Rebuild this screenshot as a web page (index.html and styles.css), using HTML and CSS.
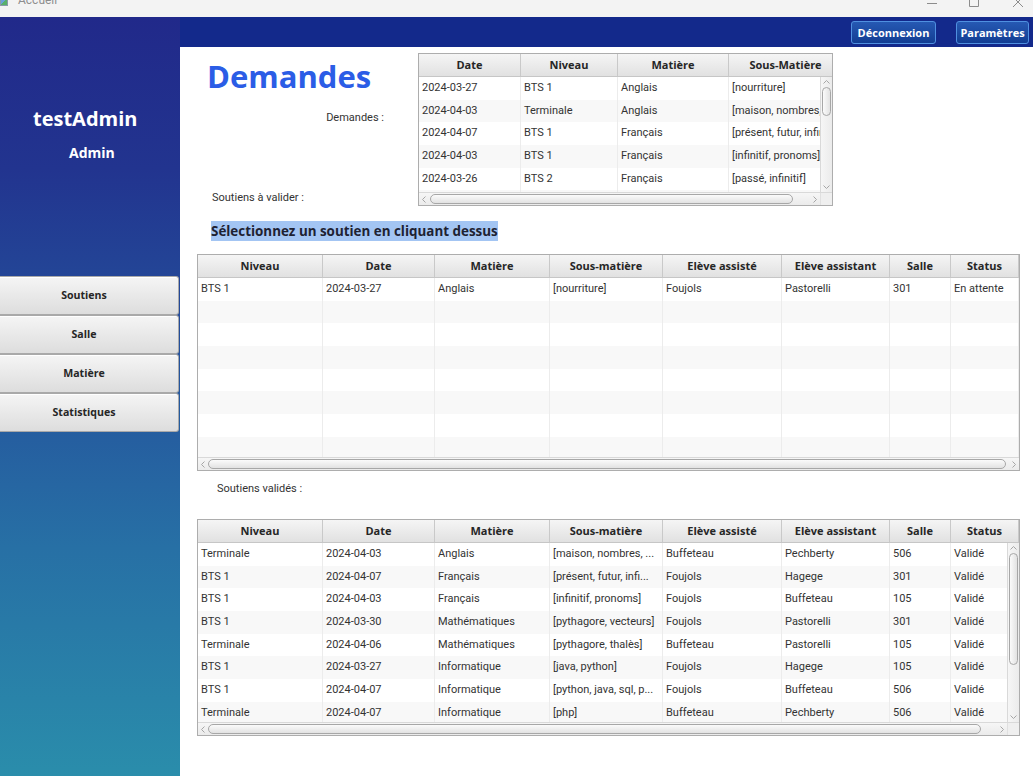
FILE: index.html
```html
<!DOCTYPE html>
<html lang="fr">
<head>
<meta charset="utf-8">
<title>Accueil</title>
<link rel="stylesheet" href="styles.css">
</head>
<body>
<div class="titlebar">
  <span class="ticon"></span>
  <span class="ttitle">Accueil</span>
  <div class="wctl">
    <svg class="wc wc-min" width="10" height="7" viewBox="0 0 10 7"><path d="M0 3.5H10" stroke="#8c8c8c" stroke-width="1"/></svg>
    <svg class="wc wc-max" width="10" height="7" viewBox="0 0 10 7"><path d="M0.5 0V6.5H9.5V0" fill="none" stroke="#8c8c8c" stroke-width="1"/></svg>
    <svg class="wc wc-close" width="10" height="7" viewBox="0 0 10 7"><path d="M0 -3L10 7M10 -3L0 7" stroke="#8c8c8c" stroke-width="1"/></svg>
  </div>
</div>
<div class="app">
  <aside class="sidebar">
    <div class="user">testAdmin</div>
    <div class="role">Admin</div>
    <nav class="menu">
      <button class="mbtn">Soutiens</button>
      <button class="mbtn">Salle</button>
      <button class="mbtn">Matière</button>
      <button class="mbtn">Statistiques</button>
    </nav>
  </aside>
  <div class="main">
    <header class="topbar">
      <button class="tb tb-logout">Déconnexion</button>
      <button class="tb tb-params">Paramètres</button>
    </header>
    <section class="content">
      <div class="top">
        <div class="top-left">
          <h1 class="title">Demandes</h1>
          <div class="lbl lbl-dem">Demandes :</div>
          <div class="lbl lbl-val">Soutiens à valider :</div>
        </div>
        <div class="tv tv-small">
          <div class="thead cols-s">
            <div>Date</div><div>Niveau</div><div>Matière</div><div>Sous-Matière</div>
          </div>
          <div class="tbody">
            <div class="rows">
              <div class="row cols-s"><div>2024-03-27</div><div>BTS 1</div><div>Anglais</div><div>[nourriture]</div></div>
              <div class="row cols-s"><div>2024-04-03</div><div>Terminale</div><div>Anglais</div><div>[maison, nombres, couleurs]</div></div>
              <div class="row cols-s"><div>2024-04-07</div><div>BTS 1</div><div>Français</div><div>[présent, futur, infinitif]</div></div>
              <div class="row cols-s"><div>2024-04-03</div><div>BTS 1</div><div>Français</div><div>[infinitif, pronoms]</div></div>
              <div class="row cols-s"><div>2024-03-26</div><div>BTS 2</div><div>Français</div><div>[passé, infinitif]</div></div>
              <div class="row cols-s"><div></div><div></div><div></div><div></div></div>
            </div>
            <div class="vbar">
              <div class="arr"><svg width="7" height="4" viewBox="0 0 7 4"><path d="M0.5 3.5L3.5 0.5L6.5 3.5" fill="none" stroke="#a6a6a6"/></svg></div>
              <div class="vtrack"><div class="thumb-v" style="margin-top:0px;height:29px"></div></div>
              <div class="arr"><svg width="7" height="4" viewBox="0 0 7 4"><path d="M0.5 0.5L3.5 3.5L6.5 0.5" fill="none" stroke="#a6a6a6"/></svg></div>
            </div>
          </div>
          <div class="hbar">
            <div class="arr"><svg width="4" height="7" viewBox="0 0 4 7"><path d="M3.5 0.5L0.5 3.5L3.5 6.5" fill="none" stroke="#a6a6a6"/></svg></div>
            <div class="htrack"><div class="thumb-h" style="margin-left:1px;width:363px"></div></div>
            <div class="arr"><svg width="4" height="7" viewBox="0 0 4 7"><path d="M0.5 0.5L3.5 3.5L0.5 6.5" fill="none" stroke="#a6a6a6"/></svg></div>
            <div class="corner"></div>
          </div>
        </div>
      </div>

      <div class="hint">Sélectionnez un soutien en cliquant dessus</div>

      <div class="tv tv-big">
        <div class="thead cols-b">
          <div>Niveau</div><div>Date</div><div>Matière</div><div>Sous-matière</div><div>Elève assisté</div><div>Elève assistant</div><div>Salle</div><div>Status</div>
        </div>
        <div class="tbody">
          <div class="rows">
            <div class="row cols-b"><div>BTS 1</div><div>2024-03-27</div><div>Anglais</div><div>[nourriture]</div><div>Foujols</div><div>Pastorelli</div><div>301</div><div>En attente</div></div>
            <div class="row cols-b"><div></div><div></div><div></div><div></div><div></div><div></div><div></div><div></div></div>
            <div class="row cols-b"><div></div><div></div><div></div><div></div><div></div><div></div><div></div><div></div></div>
            <div class="row cols-b"><div></div><div></div><div></div><div></div><div></div><div></div><div></div><div></div></div>
            <div class="row cols-b"><div></div><div></div><div></div><div></div><div></div><div></div><div></div><div></div></div>
            <div class="row cols-b"><div></div><div></div><div></div><div></div><div></div><div></div><div></div><div></div></div>
            <div class="row cols-b"><div></div><div></div><div></div><div></div><div></div><div></div><div></div><div></div></div>
            <div class="row cols-b"><div></div><div></div><div></div><div></div><div></div><div></div><div></div><div></div></div>
          </div>
        </div>
        <div class="hbar">
          <div class="arr"><svg width="4" height="7" viewBox="0 0 4 7"><path d="M3.5 0.5L0.5 3.5L3.5 6.5" fill="none" stroke="#a6a6a6"/></svg></div>
          <div class="htrack"><div class="thumb-h" style="margin-left:0px;width:798px"></div></div>
          <div class="arr"><svg width="4" height="7" viewBox="0 0 4 7"><path d="M0.5 0.5L3.5 3.5L0.5 6.5" fill="none" stroke="#a6a6a6"/></svg></div>
        </div>
      </div>

      <div class="lbl lbl-ok">Soutiens validés :</div>

      <div class="tv tv-big tv-last">
        <div class="thead cols-b">
          <div>Niveau</div><div>Date</div><div>Matière</div><div>Sous-matière</div><div>Elève assisté</div><div>Elève assistant</div><div>Salle</div><div>Status</div>
        </div>
        <div class="tbody">
          <div class="rows">
            <div class="row cols-b"><div>Terminale</div><div>2024-04-03</div><div>Anglais</div><div>[maison, nombres, ...</div><div>Buffeteau</div><div>Pechberty</div><div>506</div><div>Validé</div></div>
            <div class="row cols-b"><div>BTS 1</div><div>2024-04-07</div><div>Français</div><div>[présent, futur, infi...</div><div>Foujols</div><div>Hagege</div><div>301</div><div>Validé</div></div>
            <div class="row cols-b"><div>BTS 1</div><div>2024-04-03</div><div>Français</div><div>[infinitif, pronoms]</div><div>Foujols</div><div>Buffeteau</div><div>105</div><div>Validé</div></div>
            <div class="row cols-b"><div>BTS 1</div><div>2024-03-30</div><div>Mathématiques</div><div>[pythagore, vecteurs]</div><div>Foujols</div><div>Pastorelli</div><div>301</div><div>Validé</div></div>
            <div class="row cols-b"><div>Terminale</div><div>2024-04-06</div><div>Mathématiques</div><div>[pythagore, thalès]</div><div>Buffeteau</div><div>Pastorelli</div><div>105</div><div>Validé</div></div>
            <div class="row cols-b"><div>BTS 1</div><div>2024-03-27</div><div>Informatique</div><div>[java, python]</div><div>Foujols</div><div>Hagege</div><div>105</div><div>Validé</div></div>
            <div class="row cols-b"><div>BTS 1</div><div>2024-04-07</div><div>Informatique</div><div>[python, java, sql, p...</div><div>Foujols</div><div>Buffeteau</div><div>506</div><div>Validé</div></div>
            <div class="row cols-b"><div>Terminale</div><div>2024-04-07</div><div>Informatique</div><div>[php]</div><div>Buffeteau</div><div>Pechberty</div><div>506</div><div>Validé</div></div>
          </div>
          <div class="vbar">
            <div class="arr"><svg width="7" height="4" viewBox="0 0 7 4"><path d="M0.5 3.5L3.5 0.5L6.5 3.5" fill="none" stroke="#a6a6a6"/></svg></div>
            <div class="vtrack"><div class="thumb-v" style="margin-top:0px;height:112px"></div></div>
            <div class="arr"><svg width="7" height="4" viewBox="0 0 7 4"><path d="M0.5 0.5L3.5 3.5L6.5 0.5" fill="none" stroke="#a6a6a6"/></svg></div>
          </div>
        </div>
        <div class="hbar">
          <div class="arr"><svg width="4" height="7" viewBox="0 0 4 7"><path d="M3.5 0.5L0.5 3.5L3.5 6.5" fill="none" stroke="#a6a6a6"/></svg></div>
          <div class="htrack"><div class="thumb-h" style="margin-left:0px;width:773px"></div></div>
          <div class="arr"><svg width="4" height="7" viewBox="0 0 4 7"><path d="M0.5 0.5L3.5 3.5L0.5 6.5" fill="none" stroke="#a6a6a6"/></svg></div>
          <div class="corner"></div>
        </div>
      </div>
    </section>
  </div>
</div>
</body>
</html>
```
FILE: styles.css
```css
* { box-sizing: border-box; margin: 0; padding: 0; }
html, body { width: 1033px; height: 776px; overflow: hidden; }
body { font-family: "Roboto", "Open Sans", sans-serif; background: #fff; color: #333; }

/* window title bar */
.titlebar { height: 17px; background: #f3f3f3; display: flex; align-items: flex-start; overflow: hidden; }
.ticon { width: 8px; height: 7px; margin-top: -1px; background: linear-gradient(135deg, #6aa0d8 0 45%, #58b06a 45% 100%); border: 1px solid #8a9aa8; }
.ttitle { font-size: 12px; line-height: 14px; color: #8e8e8e; margin: -7px 0 0 10px; }
.wctl { margin-left: auto; display: flex; align-items: flex-start; padding-right: 10px; }
.wc { display: block; }
.wc-max { margin-left: 32px; }
.wc-close { margin-left: 34px; }

/* app frame */
.app { display: flex; height: 759px; }
.sidebar {
  width: 180px; flex: none;
  background: linear-gradient(180deg, #21298a 0%, #22348f 20%, #24529c 45%, #2770a5 70%, #2a8dab 100%);
  display: flex; flex-direction: column; padding-top: 90px;
}
.user { font-family: "Open Sans", sans-serif; font-weight: 700; font-size: 20px; line-height: 24px; color: #fff; padding-left: 33px; }
.role { font-family: "Open Sans", sans-serif; font-weight: 700; font-size: 14px; line-height: 18px; color: #fff; margin-top: 12.7px; padding-left: 69px; }
.menu { margin-top: 114.3px; display: flex; flex-direction: column; width: 179px; }
.mbtn {
  height: 39px; width: 179px; padding-right: 10px;
  border: 1px solid #a9a9a9; border-left: none; border-radius: 0 3px 3px 0;
  background: linear-gradient(180deg, #f5f5f5, #dddddd);
  font-family: "Open Sans", sans-serif; font-weight: 700; font-size: 10.6px; color: #262626;
  box-shadow: inset 0 1px 0 #fff;
}

.main { flex: 1; display: flex; flex-direction: column; min-width: 0; }
.topbar { height: 30px; flex: none; background: #13298b; display: flex; justify-content: flex-end; align-items: flex-start; gap: 20px; padding: 4px 4px 0 0; }
.tb {
  height: 23px; border: 1px solid #4f90e0; border-radius: 3px;
  background: linear-gradient(180deg, #2659b3, #123d93);
  color: #fff; font-family: "Open Sans", sans-serif; font-weight: 700; font-size: 11px;
}
.tb-logout { width: 85px; }
.tb-params { width: 73px; }

.content { flex: 1; display: flex; flex-direction: column; align-items: flex-start; padding-top: 6px; }
.top { display: flex; height: 153px; }
.top-left { width: 238px; display: flex; flex-direction: column; }
.title { font-family: "Open Sans", sans-serif; font-weight: 700; font-size: 31px; line-height: 40px; color: #2b5de6; margin: 3px 0 0 27px; }
.lbl { font-size: 11px; line-height: 15px; color: #333; }
.lbl-dem { align-self: flex-end; margin: 14px 34px 0 0; }
.lbl-val { margin: 65px 0 0 32px; }
.lbl-ok { margin: 10px 0 0 37px; }

.hint {
  margin: 15px 0 0 31px; height: 20px;
  font-family: "Open Sans", sans-serif; font-weight: 700; font-size: 13.4px; line-height: 20px;
  background: #a3c5f3; color: #1e2232; white-space: nowrap;
}

/* table views */
.tv { border: 1px solid #adadad; background: #fff; display: flex; flex-direction: column; overflow: hidden; }
.tv-small { width: 415px; height: 153px; }
.tv-big { width: 823px; height: 217px; margin: 13px 0 0 17px; }
.tv-last { margin-top: 23px; }

.cols-s { grid-template-columns: 102px 97px 111px 114px; }
.cols-b { grid-template-columns: 125px 112px 115px 113px 119px 108px 61px 68px; }

.thead { display: grid; height: 23px; flex: none; background: linear-gradient(180deg, #f5f5f5, #e1e1e1); border-bottom: 1px solid #c6c6c6; }
.thead div {
  border-right: 1px solid #c9c9c9;
  font-family: "Open Sans", sans-serif; font-weight: 700; font-size: 11px; line-height: 22px;
  text-align: center; color: #262626; white-space: nowrap; overflow: hidden;
}
.tbody { flex: 1; display: flex; min-height: 0; overflow: hidden; }
.rows { flex: 1; overflow: hidden; min-width: 0; }
.row { display: grid; height: 22.7px; background: #fff; }
.row:nth-child(even) { background: #f8f8f8; }
.row div {
  border-right: 1px solid #ececec;
  font-size: 11px; line-height: 22.7px; padding-left: 3px; color: #333;
  white-space: nowrap; overflow: hidden;
}

/* scroll bars */
.hbar { height: 13px; flex: none; display: flex; background: linear-gradient(180deg, #f6f6f6, #ebebeb); border-top: 1px solid #d9d9d9; }
.hbar .arr { width: 10px; flex: none; display: flex; align-items: center; justify-content: center; }
.hbar .arr:nth-child(3) { width: 11px; }
.htrack { flex: 1; padding-top: 1px; }
.thumb-h { height: 10px; border: 1px solid #a7a7a7; border-radius: 5px; background: linear-gradient(180deg, #fbfbfb, #e2e2e2); }
.corner { width: 12px; flex: none; background: #efefef; border-left: 1px solid #e0e0e0; }

.vbar { width: 12px; flex: none; display: flex; flex-direction: column; background: linear-gradient(90deg, #f6f6f6, #ebebeb); border-left: 1px solid #d9d9d9; }
.vbar .arr { height: 10px; flex: none; display: flex; align-items: center; justify-content: center; }
.vtrack { flex: 1; padding-left: 1px; }
.thumb-v { width: 9px; border: 1px solid #a7a7a7; border-radius: 5px; background: linear-gradient(90deg, #fbfbfb, #e2e2e2); }
```
